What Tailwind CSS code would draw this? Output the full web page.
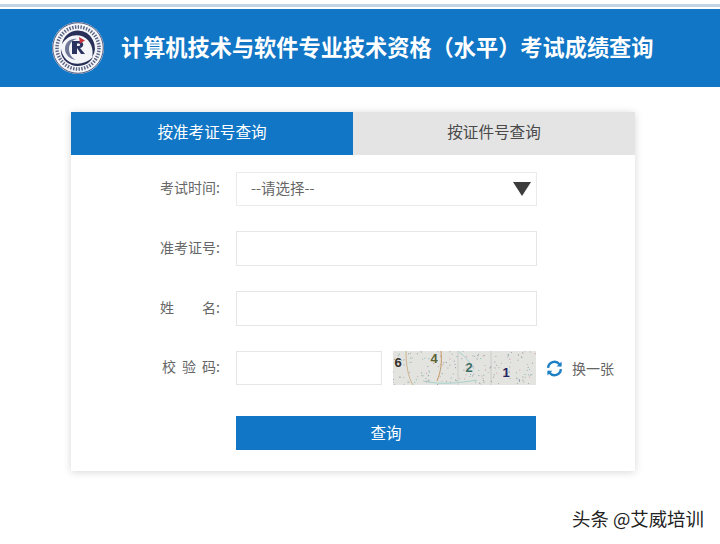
<!DOCTYPE html>
<html lang="zh">
<head>
    <meta charset="UTF-8">
    <title>计算机技术与软件专业技术资格（水平）考试成绩查询</title>
    <script src="https://cdn.jsdelivr.net/npm/@tailwindcss/browser@4"></script>
</head>
<body class="relative w-[720px] h-[544px] overflow-hidden bg-white font-['Noto_Sans_CJK_SC','Liberation_Sans',sans-serif]">
    <!-- top strip -->
    <div class="h-[9px] pt-[4px] bg-white">
        <div class="h-[3px] bg-[#c3d4e6]"></div>
    </div>

    <!-- header -->
    <header class="h-[78px] bg-[#1176c5] flex items-center pl-[52px]">
        <svg class="w-[52px] h-[52px] shrink-0" viewBox="0 0 52 52">
            <circle cx="26" cy="26" r="26" fill="#f4f5f8"/>
            <circle cx="26" cy="26" r="25.3" fill="none" stroke="#4a5478" stroke-width="1"/>
            <circle cx="26" cy="26" r="21" fill="none" stroke="#5a6384" stroke-width="3.500" stroke-dasharray="1.4 1.400"/>
            <circle cx="26" cy="26" r="18" fill="#f4f5f8"/>
            <path d="M26 8.500a17.500 17.500 0 0 1 14 27c2-8-1-17-9-21-8-3-17 0-21 8 1-8 8-14 16-14z" fill="#28305a"/>
            <path d="M9 27c-1 9 7 17 17 17 7 0 13-4 15-9-6 6-14 8-21 6-6-2-10-8-11-14z" fill="#28305a"/>
            <path d="M13 27c0-7 6-11 12-10-5 1-8 5-8 10s3 9 7 11c-6-1-11-5-11-11z" fill="#6f7896"/>
            <path d="M20 19h7c5 0 6 6 1 7l5 6h-4l-4-6v6h-5z" fill="#2a3260"/>
            <path d="M25 21.500v2.500h2c1.500 0 1.500-2.500 0-2.500z" fill="#f4f5f8"/>
            <path d="M27 15l6 3.500-5 3z" fill="#c8323c"/>
        </svg>
        <h1 class="ml-[17px] pb-[3px] text-[22.2px] leading-none font-bold text-white whitespace-nowrap">计算机技术与软件专业技术资格（水平）考试成绩查询</h1>
    </header>

    <!-- card -->
    <main class="mt-[25px] ml-[71px] w-[564px] h-[359px] bg-white shadow-[0_1px_8px_rgba(0,0,0,0.16)]">
        <div class="flex h-[43px] text-[15.6px]">
            <div class="w-[282px] pb-[3px] bg-[#1176c5] text-white flex items-center justify-center">按准考证号查询</div>
            <div class="flex-1 pb-[3px] bg-[#e4e4e4] text-[#4a4a4a] flex items-center justify-center">按证件号查询</div>
        </div>

        <form class="pt-[17px] pl-[89px] text-[14px] text-[#666]">
            <div class="flex items-center h-[34px]">
                <label class="w-[60px] pb-[3px] text-right whitespace-nowrap">考试时间:</label>
                <div class="ml-[16px] w-[301px] h-[34px] border border-[#ebebeb] flex items-center justify-between pl-[14px] pr-[5px]">
                    <span class="text-[14.5px] pb-[3px]">--请选择--</span>
                    <svg class="w-[18px] h-[14px]" viewBox="0 0 18 14"><path d="M0 0h18L9 14z" fill="#3c3c3c"/></svg>
                </div>
            </div>

            <div class="flex items-center h-[35px] mt-[25px]">
                <label class="w-[60px] pb-[3px] text-right whitespace-nowrap">准考证号:</label>
                <div class="ml-[16px] w-[301px] h-[35px] border border-[#e6e6e6]"></div>
            </div>

            <div class="flex items-center h-[35px] mt-[25px]">
                <label class="w-[60px] pb-[3px] flex justify-between whitespace-nowrap"><span>姓</span><span>名:</span></label>
                <div class="ml-[16px] w-[301px] h-[35px] border border-[#e6e6e6]"></div>
            </div>

            <div class="flex items-center h-[34px] mt-[25px]">
                <label class="w-[60px] pl-[2px] pb-[3px] flex justify-between whitespace-nowrap"><span>校</span><span>验</span><span>码:</span></label>
                <div class="ml-[16px] w-[146px] h-[34px] border border-[#e6e6e6]"></div>
                <svg class="ml-[11px] w-[143px] h-[34px]" viewBox="0 0 143 34">
                    <rect width="143" height="34" fill="#e3e3df"/>
                    <path d="M13 0c0 14 2 26 7 34" fill="none" stroke="#cdb48e" stroke-width="1"/>
                    <path d="M48 0c1 12 0 20-4 30" fill="none" stroke="#c9965f" stroke-width="1"/>
                    <path d="M30 30c18 4 36 2 54-1" fill="none" stroke="#a5d3cc" stroke-width="1"/>
                    <path d="M65 0c8 6 12 12 16 18" fill="none" stroke="#a5d3cc" stroke-width="1"/>
                    <path d="M65 0v34M98 0v34" stroke="#cbcbc8" stroke-width="1"/>
                    <g id="noise"></g>
                    <g font-family="'Liberation Sans',sans-serif" font-weight="700" font-size="13" text-anchor="middle">
                        <text x="5" y="16" fill="#33312e">6</text>
                        <text x="41" y="12" fill="#5a6236">4</text>
                        <text x="76" y="21" fill="#3e6f66">2</text>
                        <text x="113" y="26" fill="#23265e">1</text>
                    </g>
                </svg>
                <svg class="ml-[10px] w-[17px] h-[17px]" viewBox="0 0 24 24" fill="none" stroke="#1f7fc4" stroke-width="3.4">
                    <path d="M3 11a9 9 0 0 1 16-5l2 2"/>
                    <path d="M21 13a9 9 0 0 1-16 5l-2-2"/>
                    <path d="M22 2v7h-7z" fill="#1f7fc4" stroke="none"/>
                    <path d="M2 22v-7h7z" fill="#1f7fc4" stroke="none"/>
                </svg>
                <span class="ml-[9px] whitespace-nowrap">换一张</span>
            </div>

            <button type="button" class="block mt-[31px] ml-[76px] w-[300px] h-[34px] bg-[#1176c5] text-white text-[15.5px]">查询</button>
        </form>
    </main>

    <div class="absolute left-[572px] top-[507px] text-[18.4px] leading-[22px] text-[#222] whitespace-nowrap">头条 @艾威培训</div>

    <script>
        // captcha speckle, fixed seed so every render is the same
        let seed = 7;
        function rnd() {
            seed = (seed * 16807) % 2147483647;
            return seed / 2147483647;
        }
        const colors = ['#a4a8ac', '#a4a8ac', '#d19ab0', '#86bcbc', '#b5b5ac', '#8f9cab'];
        let dots = '';
        for (let i = 0; i < 170; i++) {
            const x = (rnd() * 143).toFixed(1);
            const y = (rnd() * 34).toFixed(1);
            const c = colors[Math.floor(rnd() * colors.length)];
            dots += `<circle cx="${x}" cy="${y}" r="0.6" fill="${c}"/>`;
        }
        document.getElementById('noise').innerHTML = dots;
    </script>
</body>
</html>
